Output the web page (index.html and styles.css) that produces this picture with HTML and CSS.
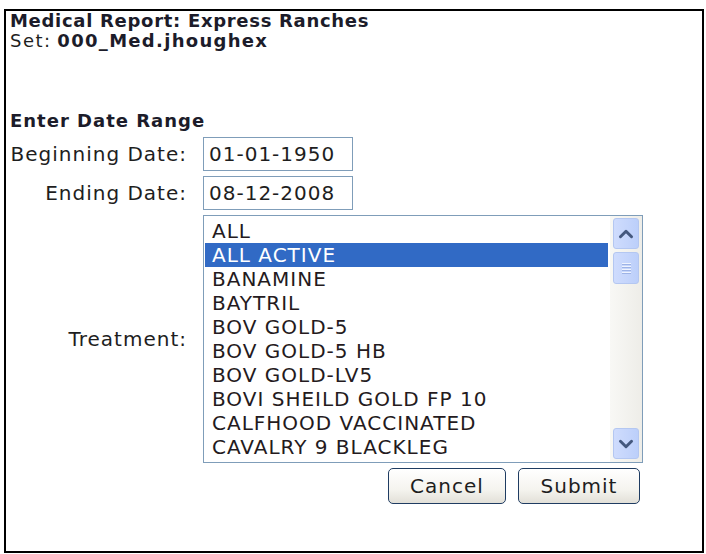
FILE: index.html
```html
<!DOCTYPE html>
<html>
<head>
<meta charset="utf-8">
<title>Medical Report</title>
<link rel="stylesheet" href="styles.css">
</head>
<body>
<div class="frame">
  <div class="title">Medical Report: Express Ranches</div>
  <div class="set"><span class="set-lbl">Set:</span> <b class="set-val">000_Med.jhoughex</b></div>
  <div class="section">Enter Date Range</div>
  <div class="form">
    <label class="lbl">Beginning Date:</label>
    <div class="input">01-01-1950</div>
    <label class="lbl">Ending Date:</label>
    <div class="input">08-12-2008</div>
    <label class="lbl">Treatment:</label>
    <div class="listbox">
      <div class="options">
        <div class="opt">ALL</div>
        <div class="opt sel">ALL ACTIVE</div>
        <div class="opt">BANAMINE</div>
        <div class="opt">BAYTRIL</div>
        <div class="opt">BOV GOLD-5</div>
        <div class="opt">BOV GOLD-5 HB</div>
        <div class="opt">BOV GOLD-LV5</div>
        <div class="opt">BOVI SHEILD GOLD FP 10</div>
        <div class="opt">CALFHOOD VACCINATED</div>
        <div class="opt">CAVALRY 9 BLACKLEG</div>
      </div>
      <div class="sb">
        <div class="sb-btn"><svg width="26" height="30" viewBox="0 0 26 30"><path d="M7 18 L13 12 L19 18" fill="none" stroke="#44587e" stroke-width="3.2" stroke-linecap="round" stroke-linejoin="round"/></svg></div>
        <div class="sb-thumb"><span class="grip"></span><span class="grip"></span><span class="grip"></span><span class="grip"></span></div>
        <div class="sb-space"></div>
        <div class="sb-btn"><svg width="26" height="30" viewBox="0 0 26 30"><path d="M7 12 L13 18 L19 12" fill="none" stroke="#44587e" stroke-width="3.2" stroke-linecap="round" stroke-linejoin="round"/></svg></div>
      </div>
    </div>
    <div></div>
    <div class="buttons">
      <button class="btn btn-cancel">Cancel</button>
      <button class="btn btn-submit">Submit</button>
    </div>
  </div>
</div>
</body>
</html>
```
FILE: styles.css
```css
html, body {
  margin: 0;
  padding: 0;
  background: #ffffff;
}
body {
  font-family: "DejaVu Sans", Verdana, sans-serif;
  color: #1e1e1e;
}
.frame {
  box-sizing: border-box;
  width: 700px;
  height: 544px;
  margin: 9px 0 0 4px;
  border: 2px solid #000;
  padding: 0 0 0 4px;
}
.title {
  font-weight: bold;
  font-size: 18px;
  letter-spacing: 0.7px;
  line-height: 20px;
  color: #1c1c2a;
}
.set {
  font-size: 18px;
  line-height: 20px;
}
.set-lbl {
  letter-spacing: 1.5px;
}
.set-val {
  letter-spacing: 1.3px;
  color: #1c1c2a;
}
.section {
  margin-top: 60px;
  font-weight: bold;
  font-size: 18px;
  letter-spacing: 1px;
  line-height: 20px;
  color: #1c1c2a;
}
.form {
  display: grid;
  grid-template-columns: 176px 440px;
  column-gap: 17px;
  row-gap: 5px;
  padding-top: 6px;
  align-items: center;
  font-size: 20px;
  letter-spacing: 1px;
  line-height: 20px;
}
.lbl {
  justify-self: end;
  text-align: right;
  margin-right: -1px;
  color: #1e1e1e;
}
.input {
  box-sizing: border-box;
  width: 150px;
  height: 34px;
  border: 1px solid #7f9db9;
  padding: 0 5px;
  line-height: 32px;
  color: #1e1e1e;
}
.listbox {
  box-sizing: border-box;
  width: 440px;
  height: 248px;
  border: 1px solid #7f9db9;
  display: flex;
}
.options {
  flex: 1;
  padding: 3px 2px 0 1px;
}
.opt {
  height: 24px;
  line-height: 24px;
  padding-left: 7px;
  white-space: nowrap;
  color: #241a20;
}
.opt.sel {
  background: #316ac5;
  color: #fff;
}
.sb {
  width: 32px;
  box-sizing: border-box;
  padding: 2px 3px 3px 3px;
  display: flex;
  flex-direction: column;
  background: linear-gradient(to right, #f8f8f5, #eeede8);
}
.sb-btn, .sb-thumb {
  box-sizing: border-box;
  width: 26px;
  border: 1px solid #b4c7f1;
  border-radius: 3px;
  background: linear-gradient(to right, #cfdcfd, #bccffa);
  display: flex;
  align-items: center;
  justify-content: center;
}
.sb-btn {
  height: 31px;
}
.sb-btn svg {
  display: block;
}
.sb-thumb {
  height: 32px;
  margin-top: 3px;
  flex-direction: column;
  gap: 1px;
}
.grip {
  display: block;
  width: 9px;
  height: 1px;
  background: #9db3e6;
  border-top: 1px solid #eef3fe;
}
.sb-space {
  flex: 1;
}
.buttons {
  display: flex;
  justify-content: flex-end;
  gap: 12px;
  padding-right: 3px;
}
.btn {
  box-sizing: border-box;
  height: 36px;
  border: 1px solid #1f3c62;
  border-radius: 5px;
  background: linear-gradient(to bottom, #ffffff 0%, #f5f4ef 60%, #e2e0d8 100%);
  font-family: "DejaVu Sans", Verdana, sans-serif;
  font-size: 20px;
  letter-spacing: 1px;
  color: #1e1e1e;
  padding: 0;
}
.btn-cancel {
  width: 118px;
}
.btn-submit {
  width: 122px;
}
```
